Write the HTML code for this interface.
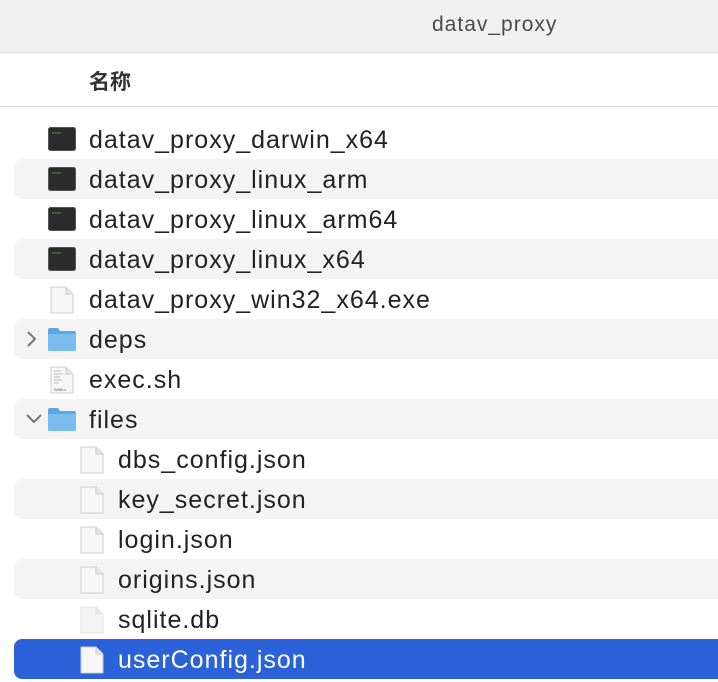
<!DOCTYPE html>
<html><head><meta charset="utf-8"><style>
body{margin:0;width:718px;height:682px;overflow:hidden;background:#fff;font-family:"Liberation Sans","Noto Sans CJK SC",sans-serif;position:relative}
.title{position:absolute;left:0;top:0;width:718px;height:52px;background:#f0f0f0;border-bottom:1px solid #dcdcdc}
.title span{position:absolute;left:432px;top:13px;font-size:21px;letter-spacing:1px;color:#4a4a4a}
.hdr{position:absolute;left:0;top:53px;width:718px;height:53px;border-bottom:1px solid #dcdcdc}
.hdr span{position:absolute;left:89px;top:13px;font-size:21px;font-weight:bold;color:#333}
.row{position:absolute;left:14px;width:720px;height:40px;border-radius:8px}
.row.s{background:#f4f4f5}
.row.sel{background:#2c62d9}
.row .t{position:absolute;top:7px;font-size:25px;letter-spacing:1px;color:#222;white-space:nowrap}
.row.sel .t{color:#fff}
.row .ic{position:absolute;top:7px}
.chev{position:absolute;left:10px;top:10px}
</style></head><body>
<div class="title"><span>datav_proxy</span></div>
<div class="hdr"><span>名称</span></div>

<div class="row" style="top:119px"><svg class="ic" style="left:34px;top:8px" width="28" height="24"><rect x="0.5" y="0.5" width="27" height="23" rx="2" fill="#2b2b2b" stroke="#555"/><text x="4" y="7" font-size="4" fill="#4c4" font-family="Liberation Mono">exec</text></svg><span class="t" style="left:75px">datav_proxy_darwin_x64</span></div>
<div class="row s" style="top:159px"><svg class="ic" style="left:34px;top:8px" width="28" height="24"><rect x="0.5" y="0.5" width="27" height="23" rx="2" fill="#2b2b2b" stroke="#555"/><text x="4" y="7" font-size="4" fill="#4c4" font-family="Liberation Mono">exec</text></svg><span class="t" style="left:75px">datav_proxy_linux_arm</span></div>
<div class="row" style="top:199px"><svg class="ic" style="left:34px;top:8px" width="28" height="24"><rect x="0.5" y="0.5" width="27" height="23" rx="2" fill="#2b2b2b" stroke="#555"/><text x="4" y="7" font-size="4" fill="#4c4" font-family="Liberation Mono">exec</text></svg><span class="t" style="left:75px">datav_proxy_linux_arm64</span></div>
<div class="row s" style="top:239px"><svg class="ic" style="left:34px;top:8px" width="28" height="24"><rect x="0.5" y="0.5" width="27" height="23" rx="2" fill="#2b2b2b" stroke="#555"/><text x="4" y="7" font-size="4" fill="#4c4" font-family="Liberation Mono">exec</text></svg><span class="t" style="left:75px">datav_proxy_linux_x64</span></div>
<div class="row" style="top:279px"><svg class="ic" style="left:36px" width="24" height="28"><path d="M1 1H16L23 8V27H1Z" fill="#f7f7f7" stroke="#ccc"/><path d="M16 1V8H23" fill="#e6e6e6" stroke="#ccc"/></svg><span class="t" style="left:75px">datav_proxy_win32_x64.exe</span></div>
<div class="row s" style="top:319px"><svg class="chev" width="14" height="20"><path d="M4 3L11 10L4 17" fill="none" stroke="#777" stroke-width="2"/></svg><svg class="ic" style="left:33px;top:8px" width="30" height="25"><path d="M1 3Q1 1 3 1H11L13 4H27Q29 4 29 6V23Q29 24 27 24H3Q1 24 1 22Z" fill="#5aa7e6"/><rect x="1" y="7" width="28" height="17" rx="1.5" fill="#79bdf0"/></svg><span class="t" style="left:75px">deps</span></div>
<div class="row" style="top:359px"><svg class="ic" style="left:36px" width="24" height="28"><path d="M1 1H16L23 8V27H1Z" fill="#f7f7f7" stroke="#ccc"/><path d="M16 1V8H23" fill="#e6e6e6" stroke="#ccc"/><path d="M4 5h7M4 8h9M4 11h6M4 14h8M4 17h5" stroke="#bbb"/><text x="4" y="25" font-size="4" fill="#444" font-family="Liberation Sans">SHELL</text></svg><span class="t" style="left:75px">exec.sh</span></div>
<div class="row s" style="top:399px"><svg class="chev" width="20" height="20"><path d="M3 6L10 13L17 6" fill="none" stroke="#777" stroke-width="2"/></svg><svg class="ic" style="left:33px;top:8px" width="30" height="25"><path d="M1 3Q1 1 3 1H11L13 4H27Q29 4 29 6V23Q29 24 27 24H3Q1 24 1 22Z" fill="#5aa7e6"/><rect x="1" y="7" width="28" height="17" rx="1.5" fill="#79bdf0"/></svg><span class="t" style="left:75px">files</span></div>
<div class="row" style="top:439px"><svg class="ic" style="left:66px" width="24" height="28"><path d="M1 1H16L23 8V27H1Z" fill="#f7f7f7" stroke="#ccc"/><path d="M16 1V8H23" fill="#e6e6e6" stroke="#ccc"/></svg><span class="t" style="left:104px">dbs_config.json</span></div>
<div class="row s" style="top:479px"><svg class="ic" style="left:66px" width="24" height="28"><path d="M1 1H16L23 8V27H1Z" fill="#f7f7f7" stroke="#ccc"/><path d="M16 1V8H23" fill="#e6e6e6" stroke="#ccc"/></svg><span class="t" style="left:104px">key_secret.json</span></div>
<div class="row" style="top:519px"><svg class="ic" style="left:66px" width="24" height="28"><path d="M1 1H16L23 8V27H1Z" fill="#f7f7f7" stroke="#ccc"/><path d="M16 1V8H23" fill="#e6e6e6" stroke="#ccc"/></svg><span class="t" style="left:104px">login.json</span></div>
<div class="row s" style="top:559px"><svg class="ic" style="left:66px" width="24" height="28"><path d="M1 1H16L23 8V27H1Z" fill="#f7f7f7" stroke="#ccc"/><path d="M16 1V8H23" fill="#e6e6e6" stroke="#ccc"/></svg><span class="t" style="left:104px">origins.json</span></div>
<div class="row" style="top:599px"><svg class="ic" style="left:66px" width="24" height="28"><path d="M1 1H16L23 8V27H1Z" fill="#f3f3f3" stroke="#e4e4e4"/><path d="M16 1V8H23" fill="#e6e6e6" stroke="#e4e4e4"/></svg><span class="t" style="left:104px">sqlite.db</span></div>
<div class="row sel" style="top:639px"><svg class="ic" style="left:66px" width="24" height="28"><path d="M1 1H16L23 8V27H1Z" fill="#f7f7f7" stroke="#ccc"/><path d="M16 1V8H23" fill="#e6e6e6" stroke="#ccc"/></svg><span class="t" style="left:104px">userConfig.json</span></div>
</body></html>
